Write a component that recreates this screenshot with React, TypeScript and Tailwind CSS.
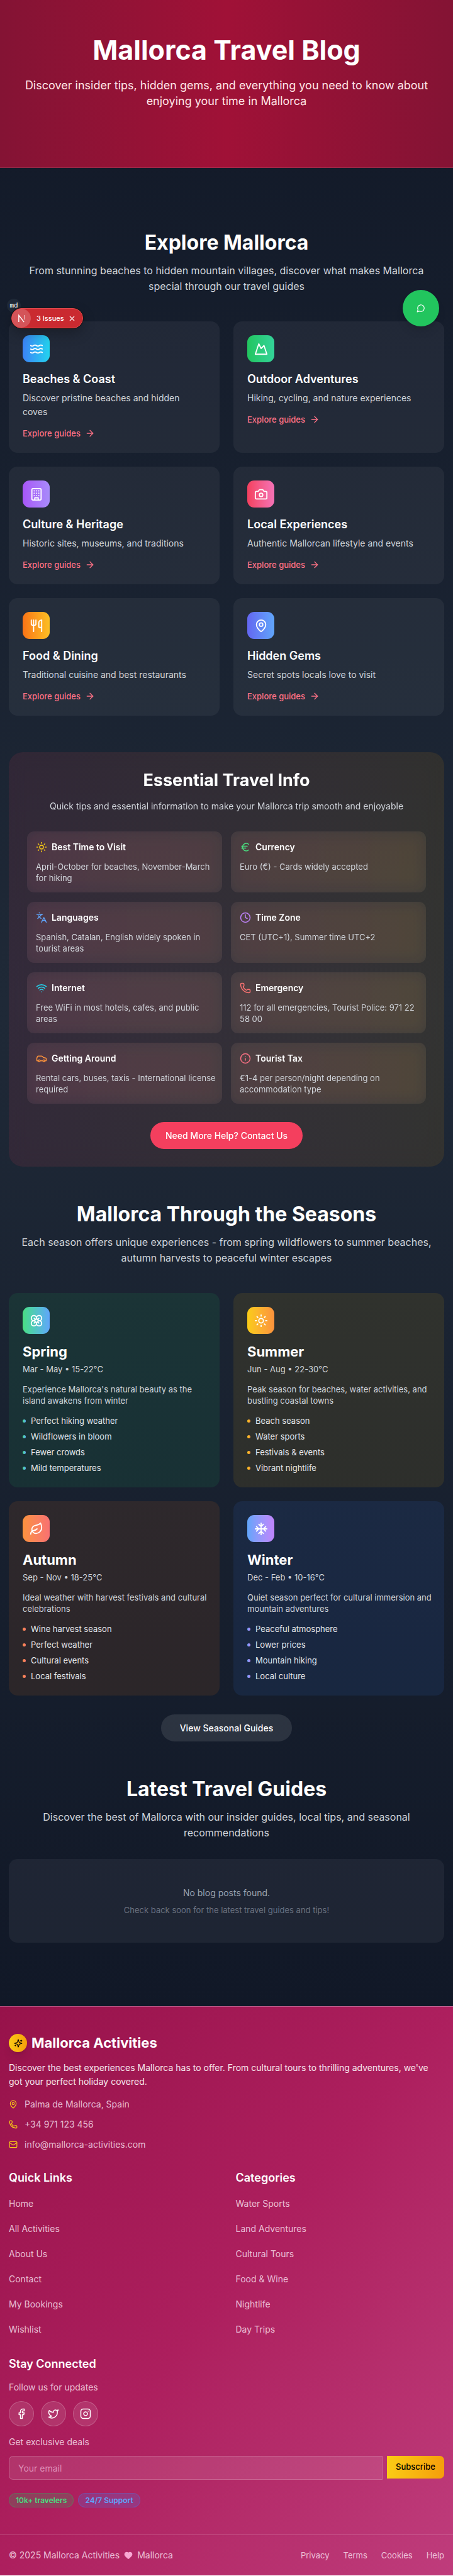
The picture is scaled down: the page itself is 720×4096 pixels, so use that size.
import type { ReactNode, SVGProps } from "react";
import {
  ArrowRight,
  Camera,
  Car,
  Clock,
  Euro,
  Facebook,
  Flower,
  Heart,
  Info,
  Instagram,
  Languages,
  Leaf,
  Mail,
  MapPin,
  Mountain,
  Phone,
  Sun,
  Twitter,
  Utensils,
  Waves,
  Wifi,
  X,
} from "lucide-react";

type IconType = (props: { className?: string }) => ReactNode;

function Stroke({ children, ...rest }: SVGProps<SVGSVGElement>) {
  return (
    <svg
      viewBox="0 0 24 24"
      fill="none"
      stroke="currentColor"
      strokeWidth={2}
      strokeLinecap="round"
      strokeLinejoin="round"
      aria-hidden="true"
      {...rest}
    >
      {children}
    </svg>
  );
}

const BuildingIcon: IconType = ({ className }) => (
  <Stroke className={className}>
    <rect width="16" height="20" x="4" y="2" rx="2" ry="2" />
    <path d="M9 22v-4h6v4M8 6h.01M16 6h.01M12 6h.01M12 10h.01M12 14h.01M16 10h.01M16 14h.01M8 10h.01M8 14h.01" />
  </Stroke>
);

const SnowIcon: IconType = ({ className }) => (
  <Stroke className={className}>
    <path d="M2 12h20M12 2v20m8-6-4-4 4-4M4 8l4 4-4 4M16 4l-4 4-4-4M8 20l4-4 4 4" />
  </Stroke>
);

const SparklesIcon: IconType = ({ className }) => (
  <Stroke className={className}>
    <path d="M9.937 15.5A2 2 0 0 0 8.5 14.063l-6.135-1.582a.5.5 0 0 1 0-.962L8.5 9.936A2 2 0 0 0 9.937 8.5l1.582-6.135a.5.5 0 0 1 .963 0L14.063 8.5A2 2 0 0 0 15.5 9.937l6.135 1.581a.5.5 0 0 1 0 .964L15.5 14.063a2 2 0 0 0-1.437 1.437l-1.582 6.135a.5.5 0 0 1-.963 0z" />
    <path d="M20 3v4M22 5h-4M4 17v2M5 18H3" />
  </Stroke>
);

const ChatIcon: IconType = ({ className }) => (
  <Stroke className={className}>
    <path d="M7.9 20A9 9 0 1 0 4 16.1L2 22Z" />
  </Stroke>
);

const guides: { icon: IconType; title: string; text: string; tone: string }[] = [
  { icon: Waves, title: "Beaches & Coast", text: "Discover pristine beaches and hidden coves", tone: "from-[#3b82f6] to-[#22d3ee]" },
  { icon: Mountain, title: "Outdoor Adventures", text: "Hiking, cycling, and nature experiences", tone: "from-[#22c55e] to-[#34d399]" },
  { icon: BuildingIcon, title: "Culture & Heritage", text: "Historic sites, museums, and traditions", tone: "from-[#a855f7] to-[#a78bfa]" },
  { icon: Camera, title: "Local Experiences", text: "Authentic Mallorcan lifestyle and events", tone: "from-[#f43f5e] to-[#f472b6]" },
  { icon: Utensils, title: "Food & Dining", text: "Traditional cuisine and best restaurants", tone: "from-[#f97316] to-[#fbbf24]" },
  { icon: MapPin, title: "Hidden Gems", text: "Secret spots locals love to visit", tone: "from-[#6366f1] to-[#60a5fa]" },
];

const facts: { icon: IconType; title: string; text: string; tone: string }[] = [
  { icon: Sun, title: "Best Time to Visit", text: "April-October for beaches, November-March for hiking", tone: "text-[#facc15]" },
  { icon: Euro, title: "Currency", text: "Euro (€) - Cards widely accepted", tone: "text-[#4ade80]" },
  { icon: Languages, title: "Languages", text: "Spanish, Catalan, English widely spoken in tourist areas", tone: "text-[#60a5fa]" },
  { icon: Clock, title: "Time Zone", text: "CET (UTC+1), Summer time UTC+2", tone: "text-[#c084fc]" },
  { icon: Wifi, title: "Internet", text: "Free WiFi in most hotels, cafes, and public areas", tone: "text-[#22d3ee]" },
  { icon: Phone, title: "Emergency", text: "112 for all emergencies, Tourist Police: 971 22 58 00", tone: "text-[#f87171]" },
  { icon: Car, title: "Getting Around", text: "Rental cars, buses, taxis - International license required", tone: "text-[#fb923c]" },
  { icon: Info, title: "Tourist Tax", text: "€1-4 per person/night depending on accommodation type", tone: "text-[#fb7185]" },
];

const seasons: {
  icon: IconType;
  title: string;
  when: string;
  text: string;
  points: string[];
  card: string;
  tone: string;
}[] = [
  {
    icon: Flower,
    title: "Spring",
    when: "Mar - May • 15-22°C",
    text: "Experience Mallorca's natural beauty as the island awakens from winter",
    points: ["Perfect hiking weather", "Wildflowers in bloom", "Fewer crowds", "Mild temperatures"],
    card: "bg-[#22c55e]/10",
    tone: "from-[#4ade80] to-[#60a5fa]",
  },
  {
    icon: Sun,
    title: "Summer",
    when: "Jun - Aug • 22-30°C",
    text: "Peak season for beaches, water activities, and bustling coastal towns",
    points: ["Beach season", "Water sports", "Festivals & events", "Vibrant nightlife"],
    card: "bg-[#eab308]/10",
    tone: "from-[#facc15] to-[#fb923c]",
  },
  {
    icon: Leaf,
    title: "Autumn",
    when: "Sep - Nov • 18-25°C",
    text: "Ideal weather with harvest festivals and cultural celebrations",
    points: ["Wine harvest season", "Perfect weather", "Cultural events", "Local festivals"],
    card: "bg-[#f97316]/10",
    tone: "from-[#fb923c] to-[#f87171]",
  },
  {
    icon: SnowIcon,
    title: "Winter",
    when: "Dec - Feb • 10-16°C",
    text: "Quiet season perfect for cultural immersion and mountain adventures",
    points: ["Peaceful atmosphere", "Lower prices", "Mountain hiking", "Local culture"],
    card: "bg-[#3b82f6]/10",
    tone: "from-[#60a5fa] to-[#c084fc]",
  },
];

function SectionHeading({ title, text }: { title: string; text: string }) {
  return (
    <div className="text-center">
      <h2 className="text-[32px] leading-[36px] font-bold text-white">{title}</h2>
      <p className="mx-auto mt-[14px] max-w-[672px] text-base leading-[25px] text-[#d1d5db]">{text}</p>
    </div>
  );
}

function LinkColumn({ title, links }: { title: string; links: string[] }) {
  return (
    <nav aria-label={title}>
      <h3 className="text-lg leading-[25px] font-semibold text-white">{title}</h3>
      <ul className="mt-[14px] flex flex-col gap-[11px]">
        {links.map((label) => (
          <li key={label} className="flex h-[29px] items-center">
            <a href="#" className="text-sm text-pink-100/80">
              {label}
            </a>
          </li>
        ))}
      </ul>
    </nav>
  );
}

export default function App() {
  return (
    <div className="relative font-['Inter',sans-serif] text-white">
      <div className="bg-linear-to-b from-[#111827] via-[#1f2937] to-[#111827]">
        <header className="border-b border-white/10 bg-linear-to-r from-[#841334] via-[#a01137] to-[#841334] px-[14px] pt-[58px] pb-[93px] text-center">
          <h1 className="text-[43px] leading-[43px] font-bold">Mallorca Travel Blog</h1>
          <p className="mx-auto mt-[22px] max-w-[691px] text-lg leading-[25px] text-rose-100">
            Discover insider tips, hidden gems, and everything you need to know about enjoying your time in Mallorca
          </p>
        </header>

        <main className="flex flex-col gap-[58px] px-[14px] py-[101px]">
          <section>
            <SectionHeading
              title="Explore Mallorca"
              text="From stunning beaches to hidden mountain villages, discover what makes Mallorca special through our travel guides"
            />
            <div className="mt-[43px] grid grid-cols-2 gap-[22px]">
              {guides.map(({ icon: Icon, title, text, tone }) => (
                <a key={title} href="#" className="block rounded-[14px] bg-white/5 p-[22px]">
                  <span className={`flex size-[43px] items-center justify-center rounded-[11px] bg-linear-to-r ${tone}`}>
                    <Icon className="size-[22px]" />
                  </span>
                  <h3 className="mt-[14px] text-lg leading-[25px] font-semibold">{title}</h3>
                  <p className="mt-[7px] pr-3 text-sm leading-[22px] text-[#d1d5db]">{text}</p>
                  <span className="mt-[14px] flex items-center gap-[7px] text-[13px] leading-[18px] font-medium text-[#fb7185]">
                    Explore guides
                    <ArrowRight className="size-4" />
                  </span>
                </a>
              ))}
            </div>
          </section>

          <section className="rounded-[22px] bg-linear-to-r from-[#f43f5e]/10 to-[#f59e0b]/10 px-[29px] pt-[29px] pb-7 text-center backdrop-blur-md">
            <h2 className="text-[27px] leading-8 font-bold">Essential Travel Info</h2>
            <p className="mt-[14px] text-sm leading-[22px] text-[#d1d5db]">
              Quick tips and essential information to make your Mallorca trip smooth and enjoyable
            </p>
            <div className="mt-[29px] grid grid-cols-2 gap-x-[14px] gap-y-[15px] text-left">
              {facts.map(({ icon: Icon, title, text, tone }) => (
                <div key={title} className="rounded-[11px] bg-white/5 py-[14px] pr-2 pl-[14px] backdrop-blur-md">
                  <h3 className="flex items-center gap-[7px] text-sm leading-[22px] font-semibold">
                    <span className={tone}>
                      <Icon className="size-[18px]" />
                    </span>
                    {title}
                  </h3>
                  <p className="mt-[11px] min-h-9 text-[13px] leading-[18px] text-[#d1d5db]">{text}</p>
                </div>
              ))}
            </div>
            <button type="button" className="mt-[29px] h-[43px] rounded-full bg-[#f43f5e] px-6 text-sm font-medium">
              Need More Help? Contact Us
            </button>
          </section>

          <section className="flex flex-col">
            <SectionHeading
              title="Mallorca Through the Seasons"
              text="Each season offers unique experiences - from spring wildflowers to summer beaches, autumn harvests to peaceful winter escapes"
            />
            <div className="mt-[43px] grid grid-cols-2 gap-[22px]">
              {seasons.map(({ icon: Icon, title, when, text, points, card, tone }) => (
                <article key={title} className={`rounded-[14px] py-[22px] pr-[14px] pl-[22px] ${card}`}>
                  <span className={`flex size-[43px] items-center justify-center rounded-[11px] bg-linear-to-r ${tone}`}>
                    <Icon className="size-[22px]" />
                  </span>
                  <h3 className="mt-[14px] text-[22px] leading-[29px] font-bold">{title}</h3>
                  <p className="mt-1 text-[13px] leading-[18px] text-[#d1d5db]">{when}</p>
                  <p className="mt-[14px] text-[13px] leading-[18px] text-[#d1d5db]">{text}</p>
                  <ul className="mt-[14px] flex flex-col gap-[7px]">
                    {points.map((point) => (
                      <li key={point} className="flex items-center gap-2 text-[13px] leading-[18px] text-[#e5e7eb]">
                        <span className={`size-[5px] rounded-full bg-linear-to-r ${tone}`} />
                        {point}
                      </li>
                    ))}
                  </ul>
                </article>
              ))}
            </div>
            <button
              type="button"
              className="mt-[30px] h-[43px] self-center rounded-full bg-white/10 px-[30px] text-sm font-medium"
            >
              View Seasonal Guides
            </button>
          </section>

          <section>
            <SectionHeading
              title="Latest Travel Guides"
              text="Discover the best of Mallorca with our insider guides, local tips, and seasonal recommendations"
            />
            <div className="mt-[29px] rounded-[14px] bg-white/5 py-[43px] text-center">
              <p className="text-sm leading-[22px] text-[#9ca3af]">No blog posts found.</p>
              <p className="mt-[7px] text-[13px] leading-[18px] text-[#6b7280]">
                Check back soon for the latest travel guides and tips!
              </p>
            </div>
          </section>
        </main>
      </div>

      <footer className="border-t border-white/20 bg-linear-to-br from-[#97124a] via-[#ad1f5e] to-[#bf3c7c]">
        <div className="px-[14px] py-[43px]">
          <div className="flex items-center gap-[7px]">
            <span className="flex size-[29px] items-center justify-center rounded-full bg-linear-to-r from-[#facc15] to-[#f59e0b] text-black shadow-lg">
              <SparklesIcon className="size-[14px]" />
            </span>
            <span className="text-[22px] leading-[29px] font-bold">Mallorca Activities</span>
          </div>
          <p className="mt-[14px] pr-4 text-sm leading-[22px] text-white/90">
            Discover the best experiences Mallorca has to offer. From cultural tours to thrilling adventures, we've got
            your perfect holiday covered.
          </p>
          <ul className="mt-[14px] flex flex-col gap-[10px] text-sm leading-[22px] text-pink-100/80">
            <li className="flex items-center gap-[11px]">
              <MapPin className="size-[14px] text-[#facc15]" />
              Palma de Mallorca, Spain
            </li>
            <li className="flex items-center gap-[11px]">
              <Phone className="size-[14px] text-[#facc15]" />
              +34 971 123 456
            </li>
            <li className="flex items-center gap-[11px]">
              <Mail className="size-[14px] text-[#facc15]" />
              info@mallorca-activities.com
            </li>
          </ul>

          <div className="mt-[29px] grid grid-cols-2 gap-[29px]">
            <LinkColumn
              title="Quick Links"
              links={["Home", "All Activities", "About Us", "Contact", "My Bookings", "Wishlist"]}
            />
            <LinkColumn
              title="Categories"
              links={["Water Sports", "Land Adventures", "Cultural Tours", "Food & Wine", "Nightlife", "Day Trips"]}
            />
          </div>

          <h3 className="mt-7 text-lg leading-[25px] font-semibold">Stay Connected</h3>
          <p className="mt-[14px] text-sm leading-[22px] text-pink-100/80">Follow us for updates</p>
          <div className="mt-[11px] flex gap-[11px]">
            {[
              { label: "Facebook", icon: Facebook },
              { label: "Twitter", icon: Twitter },
              { label: "Instagram", icon: Instagram },
            ].map(({ label, icon: Icon }) => (
              <a
                key={label}
                href="#"
                aria-label={label}
                className="flex size-10 items-center justify-center rounded-full border border-white/20 bg-white/10"
              >
                <Icon className="size-[18px]" />
              </a>
            ))}
          </div>
          <form onSubmit={(event) => event.preventDefault()}>
            <label htmlFor="email" className="mt-[14px] block text-sm leading-[22px] text-pink-100/80">
              Get exclusive deals
            </label>
            <div className="mt-[11px] flex items-start gap-[7px]">
              <input
                id="email"
                type="email"
                placeholder="Your email"
                className="h-[38px] min-w-0 flex-1 rounded-l-[7px] border border-white/20 bg-white/10 px-[14px] text-sm placeholder:text-pink-200/60"
              />
              <button
                type="submit"
                className="h-9 rounded-r-[7px] bg-linear-to-r from-[#facc15] to-[#f59e0b] px-[14px] text-[13px] font-medium text-black"
              >
                Subscribe
              </button>
            </div>
          </form>
          <div className="mt-[21px] flex gap-[7px] text-xs leading-[21px] font-semibold">
            <span className="rounded-full border border-[#22c55e]/30 bg-[#22c55e]/20 px-[10px] text-[#4ade80]">
              10k+ travelers
            </span>
            <span className="rounded-full border border-[#3b82f6]/30 bg-[#3b82f6]/20 px-[10px] text-[#60a5fa]">
              24/7 Support
            </span>
          </div>
        </div>

        <div className="flex items-center justify-between border-t border-white/20 px-[14px] py-[21px] text-pink-100/80">
          <p className="flex items-center gap-[7px] text-sm leading-[22px]">
            © 2025 Mallorca Activities
            <Heart className="size-[14px] fill-[#f9a8d4] text-[#f9a8d4]" />
            Mallorca
          </p>
          <nav aria-label="Legal" className="flex gap-[22px] text-[13px] leading-[18px]">
            <a href="#">Privacy</a>
            <a href="#">Terms</a>
            <a href="#">Cookies</a>
            <a href="#">Help</a>
          </nav>
        </div>
      </footer>

      <div className="absolute top-[475px] left-[11px] flex size-[22px] items-center justify-center rounded-full bg-[#1f2937] font-['Liberation_Mono',monospace] text-[11px]">
        md
      </div>
      <div className="absolute top-[490px] left-[18px] flex h-8 items-center rounded-full border border-[#e5484d] bg-[#ca2a30] pr-[10px] text-[11px] font-medium shadow-[0_0_0_1px_#171717,0_8px_20px_rgba(0,0,0,0.25)]">
        <span className="flex size-[30px] items-center justify-center rounded-full bg-white/20">
          <svg viewBox="0 0 14 14" className="size-[13px]" fill="none" stroke="white" strokeWidth="1.5" aria-hidden="true">
            <path d="M2 13V1.5L11 13" />
            <path d="M12 1v8" strokeOpacity="0.6" />
          </svg>
        </span>
        <span className="pl-[9px]">3 Issues</span>
        <button type="button" aria-label="Close" className="pl-[6px]">
          <X className="size-[13px]" />
        </button>
      </div>
      <button
        type="button"
        aria-label="Chat"
        className="absolute top-[461px] right-[22px] flex size-[58px] items-center justify-center rounded-full bg-[#22c55e] shadow-lg"
      >
        <ChatIcon className="size-[14px]" />
      </button>
    </div>
  );
}
